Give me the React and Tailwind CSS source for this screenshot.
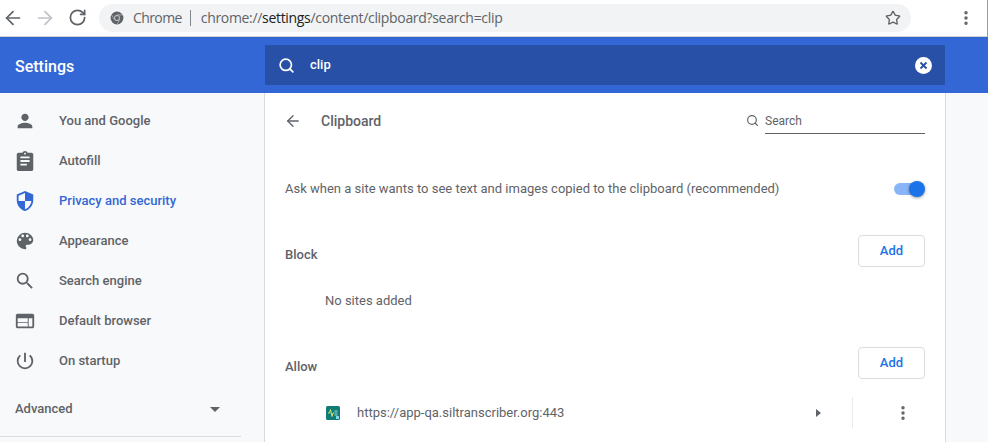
import React from 'react';
import { ArrowLeft, ArrowRight, RotateCw, Star, EllipsisVertical, Search } from 'lucide-react';

const NAV = [
  { label: 'You and Google', d: 'M12 12c2.21 0 4-1.79 4-4s-1.79-4-4-4-4 1.79-4 4 1.79 4 4 4zm0 2c-2.67 0-8 1.34-8 4v2h16v-2c0-2.66-5.33-4-8-4z' },
  { label: 'Autofill', d: 'M19 3h-4.18C14.4 1.84 13.3 1 12 1s-2.4.84-2.82 2H5c-1.1 0-2 .9-2 2v16c0 1.1.9 2 2 2h14c1.1 0 2-.9 2-2V5c0-1.1-.9-2-2-2zm-7 0c.55 0 1 .45 1 1s-.45 1-1 1-1-.45-1-1 .45-1 1-1zm2 14H7v-2h7v2zm3-4H7v-2h10v2zm0-4H7V7h10v2z' },
  { label: 'Privacy and security', active: true, d: 'M12 1L3 5v6c0 5.55 3.84 10.74 9 12 5.16-1.26 9-6.45 9-12V5l-9-4zm0 10.99h7c-.53 4.12-3.28 7.79-7 8.94V12H5V6.3l7-3.11v8.8z' },
  { label: 'Appearance', d: 'M12 3a9 9 0 0 0 0 18c.83 0 1.5-.67 1.5-1.5 0-.39-.15-.74-.39-1.01-.23-.26-.38-.61-.38-.99 0-.83.67-1.5 1.5-1.5H16c2.76 0 5-2.24 5-5 0-4.42-4.03-8-9-8zm-5.5 9a1.5 1.5 0 1 1 0-3 1.5 1.5 0 0 1 0 3zm3-4a1.5 1.5 0 1 1 0-3 1.5 1.5 0 0 1 0 3zm5 0a1.5 1.5 0 1 1 0-3 1.5 1.5 0 0 1 0 3zm3 4a1.5 1.5 0 1 1 0-3 1.5 1.5 0 0 1 0 3z' },
  { label: 'Search engine', d: 'M15.5 14h-.79l-.28-.27A6.47 6.47 0 0 0 16 9.5 6.5 6.5 0 1 0 9.5 16c1.61 0 3.09-.59 4.23-1.57l.27.28v.79l5 4.99L20.49 19l-4.99-5zm-6 0C7.01 14 5 11.99 5 9.5S7.01 5 9.5 5 14 7.01 14 9.5 11.99 14 9.5 14z' },
  { label: 'Default browser', d: 'M20 4H4c-1.1 0-2 .9-2 2v12c0 1.1.9 2 2 2h16c1.1 0 2-.9 2-2V6c0-1.1-.9-2-2-2zm-5 14H4v-4h11v4zm0-5H4V9h11v4zm5 5h-4V9h4v9z' },
  { label: 'On startup', d: 'M13 3h-2v10h2V3zm4.83 2.17l-1.42 1.42A6.92 6.92 0 0 1 19 12c0 3.87-3.13 7-7 7s-7-3.13-7-7c0-2.22 1.03-4.2 2.58-5.42L6.17 5.17A8.93 8.93 0 0 0 3 12a9 9 0 0 0 18 0c0-2.74-1.23-5.18-3.17-6.83z' },
];

function ChromeLogo() {
  return (
    <svg width="14" height="14" viewBox="0 0 24 24" fill="#5f6368">
      <circle cx="12" cy="12" r="11" />
      <circle cx="12" cy="12" r="5" fill="#c4c6c9" />
      <circle cx="12" cy="12" r="3.4" fill="#5f6368" />
      <path d="M12 6.6h9.4M7.3 14.7L2.8 6.6M16.7 14.7l-4.6 8" stroke="#c4c6c9" strokeWidth="1.1" />
    </svg>
  );
}

function AddButton() {
  return (
    <button className="w-[67px] h-[32px] border border-[#dadce0] rounded-[4px] bg-white text-[13px] font-medium text-[#1a73e8]">
      Add
    </button>
  );
}

export default function App() {
  return (
    <div className="w-[988px] h-[442px] overflow-hidden bg-[#f8f9fa] flex flex-col font-['Roboto',sans-serif]">
      <div className="h-[37px] shrink-0 bg-white border-b border-b-[#d0d0d0] border-r border-r-[#9a9a9a] flex items-center pl-[2px] pb-px">
        <ArrowLeft size={22} strokeWidth={1.9} className="text-[#5f6368]" />
        <ArrowRight size={22} strokeWidth={1.9} className="text-[#bdc1c6] ml-[10px]" />
        <RotateCw size={19} strokeWidth={2.2} className="text-[#5f6368] ml-[12px]" />
        <div className="ml-[12px] w-[812px] h-[28px] rounded-full bg-[#f1f3f4] flex items-center pl-[11px] pr-[10px]">
          <ChromeLogo />
          <span className="ml-[9px] text-[14px] text-[#5f6368] font-['Open_Sans',sans-serif] tracking-[-0.6px]">Chrome</span>
          <div className="ml-[8px] mr-[10px] w-px h-[16px] bg-[#80868b]" />
          <span className="text-[14px] text-[#5f6368] font-['Open_Sans',sans-serif] tracking-[-0.32px]">
            chrome://<span className="text-[#202124]">settings</span>/content/clipboard?search=clip
          </span>
          <Star size={16} strokeWidth={2} className="ml-auto text-[#5f6368]" />
        </div>
        <EllipsisVertical size={18} strokeWidth={2.6} className="text-[#5f6368] ml-[46px]" />
      </div>

      <div className="h-[56px] shrink-0 bg-[#3367d6] flex items-center">
        <div className="w-[265px] pl-[15px] pt-[3px] text-[16px] font-medium text-white">Settings</div>
        <div className="w-[680px] h-[40px] rounded-[1px] bg-[#2850a7] flex items-center pl-[13px] pr-[13px]">
          <Search size={17} strokeWidth={2.4} className="text-white" />
          <span className="ml-[15px] text-[13px] font-medium text-white">clip</span>
          <svg className="ml-auto" width="17" height="17" viewBox="0 0 17 17">
            <circle cx="8.5" cy="8.5" r="8.5" fill="#fff" />
            <path d="M5.5 5.5l6 6M11.5 5.5l-6 6" stroke="#2850a7" strokeWidth="1.8" />
          </svg>
        </div>
      </div>

      <div className="flex-1 flex min-h-0">
        <div className="w-[264px] shrink-0 pt-[8px] flex flex-col">
          {NAV.map((item) => (
            <div key={item.label} className="h-[40px] flex items-center pl-[14px]">
              <svg viewBox="0 0 24 24" className="w-[22px] h-[22px]" fill={item.active ? '#3367d6' : '#5f6368'}>
                <path d={item.d} />
              </svg>
              <span className={`ml-[23px] text-[13px] font-medium ${item.active ? 'text-[#3367d6]' : 'text-[#5f6368]'}`}>{item.label}</span>
            </div>
          ))}
          <div className="mt-[16px] h-[24px] flex items-center pl-[15px] pr-[44px] justify-between">
            <span className="text-[13px] font-medium text-[#5f6368]">Advanced</span>
            <div className="w-0 h-0 border-l-[5px] border-r-[5px] border-t-[5px] border-l-transparent border-r-transparent border-t-[#5f6368]" />
          </div>
          <div className="mt-[15px] w-[241px] h-px bg-[#dadce0]" />
        </div>

        <div className="w-[682px] shrink-0 bg-white border-x border-[#d9dadc] pl-[20px] pr-[20px] flex flex-col">
          <div className="h-[58px] pb-[2px] flex items-center">
            <ArrowLeft size={18} strokeWidth={1.8} className="text-[#5f6368] ml-[-1px]" />
            <span className="ml-[19px] text-[14px] font-medium text-[#5f6368]">Clipboard</span>
            <div className="ml-auto flex items-center">
              <Search size={13} strokeWidth={2.2} className="text-[#5f6368] mr-[6px] mb-[2px]" />
              <div className="w-[160px] h-[25px] border-b border-[#5f6368] text-[12px] text-[#5f6368] flex items-center">Search</div>
            </div>
          </div>

          <div className="mt-[15px] h-[46px] flex items-center justify-between">
            <span className="text-[13px] text-[#5f6368]">Ask when a site wants to see text and images copied to the clipboard (recommended)</span>
            <div className="relative w-[31px] h-[16px] flex items-center">
              <div className="w-[28px] h-[12px] rounded-full bg-[#8ab4f8]" />
              <div className="absolute right-0 top-0 w-[16px] h-[16px] rounded-full bg-[#1a73e8] shadow-[0_1px_3px_rgba(0,0,0,0.4)]" />
            </div>
          </div>

          <div className="mt-[23px] h-[32px] flex items-center justify-between">
            <span className="text-[13px] font-medium text-[#5f6368] mt-[8px]">Block</span>
            <AddButton />
          </div>
          <div className="mt-[18px] h-[32px] flex items-center pl-[40px] text-[13px] text-[#5f6368]">No sites added</div>

          <div className="mt-[30px] h-[32px] flex items-center justify-between">
            <span className="text-[13px] font-medium text-[#5f6368] mt-[8px]">Allow</span>
            <AddButton />
          </div>

          <div className="mt-[18px] h-[31px] flex items-center pl-[41px]">
            <svg width="14" height="14" viewBox="0 0 14 14">
              <rect width="14" height="14" rx="1.5" fill="#0f7c78" />
              <path d="M2 7h1.5l1-3.5 1.5 7 1-3.5h1" fill="none" stroke="#d8e26a" strokeWidth="1" />
              <path d="M8.5 5h3M8.5 7h3M8.5 9h3" stroke="#d5efed" strokeWidth="0.8" />
              <rect x="10" y="10" width="3" height="3" fill="#7fd8e6" />
            </svg>
            <span className="ml-[17px] text-[13px] text-[#5f6368]">https://app-qa.siltranscriber.org:443</span>
            <div className="ml-auto w-0 h-0 border-t-[4px] border-b-[4px] border-l-[5px] border-t-transparent border-b-transparent border-l-[#5f6368]" />
            <div className="ml-[31px] w-px h-[31px] bg-[#e8eaed]" />
            <EllipsisVertical size={18} strokeWidth={2.6} className="text-[#5f6368] ml-[41px] mr-[13px]" />
          </div>
        </div>
      </div>
    </div>
  );
}
